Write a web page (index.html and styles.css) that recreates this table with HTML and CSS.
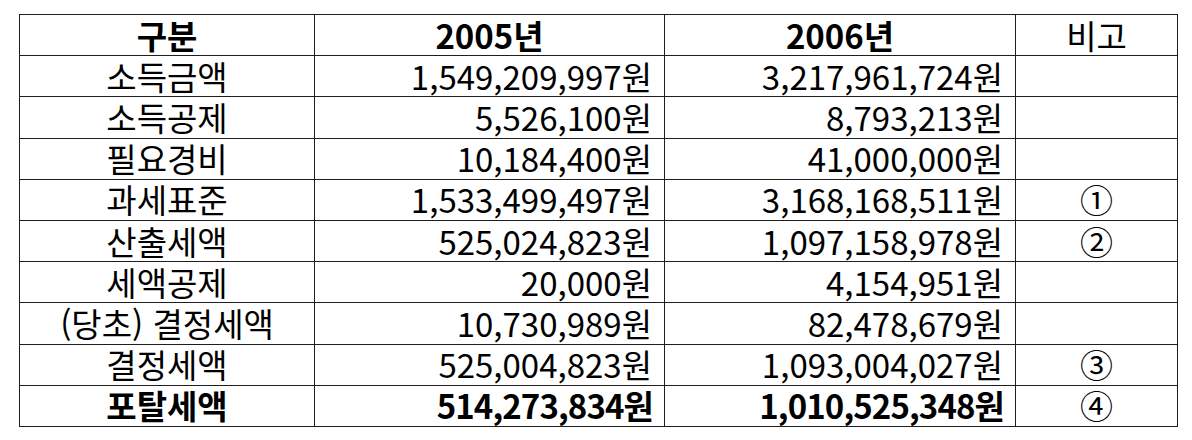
FILE: index.html
```html
<!DOCTYPE html>
<html lang="ko">
<head>
<meta charset="utf-8">
<title>세액 비교</title>
<link rel="stylesheet" href="styles.css">
</head>
<body>
<table class="tax">
  <colgroup>
    <col class="c-label">
    <col class="c-y1">
    <col class="c-y2">
    <col class="c-note">
  </colgroup>
  <tr class="head">
    <td class="label bold">구분</td>
    <td class="center bold">2005년</td>
    <td class="center bold">2006년</td>
    <td class="center">비고</td>
  </tr>
  <tr>
    <td class="label">소득금액</td>
    <td class="num">1,549,209,997원</td>
    <td class="num">3,217,961,724원</td>
    <td class="center"></td>
  </tr>
  <tr>
    <td class="label">소득공제</td>
    <td class="num">5,526,100원</td>
    <td class="num">8,793,213원</td>
    <td class="center"></td>
  </tr>
  <tr>
    <td class="label">필요경비</td>
    <td class="num">10,184,400원</td>
    <td class="num">41,000,000원</td>
    <td class="center"></td>
  </tr>
  <tr>
    <td class="label">과세표준</td>
    <td class="num">1,533,499,497원</td>
    <td class="num">3,168,168,511원</td>
    <td class="center">①</td>
  </tr>
  <tr>
    <td class="label">산출세액</td>
    <td class="num">525,024,823원</td>
    <td class="num">1,097,158,978원</td>
    <td class="center">②</td>
  </tr>
  <tr>
    <td class="label">세액공제</td>
    <td class="num">20,000원</td>
    <td class="num">4,154,951원</td>
    <td class="center"></td>
  </tr>
  <tr>
    <td class="label">(당초) 결정세액</td>
    <td class="num">10,730,989원</td>
    <td class="num">82,478,679원</td>
    <td class="center"></td>
  </tr>
  <tr>
    <td class="label">결정세액</td>
    <td class="num">525,004,823원</td>
    <td class="num">1,093,004,027원</td>
    <td class="center">③</td>
  </tr>
  <tr class="total">
    <td class="label bold">포탈세액</td>
    <td class="num bold">514,273,834원</td>
    <td class="num bold">1,010,525,348원</td>
    <td class="center">④</td>
  </tr>
</table>
</body>
</html>
```

FILE: styles.css
```css
html, body {
  margin: 0;
  padding: 0;
  background: #ffffff;
}

body {
  padding: 14px 0 0 19px;
  font-family: "Noto Sans CJK KR", "Noto Sans", sans-serif;
  color: #000000;
}

.tax {
  border-collapse: collapse;
  table-layout: fixed;
  width: 1158px;
  font-size: 33px;
  line-height: 1;
}

.c-label { width: 295px; }
.c-y1 { width: 350px; }
.c-y2 { width: 351px; }
.c-note { width: 162px; }

.tax tr {
  height: 41.2px;
}

.tax td {
  border: 1px solid #1e1e1e;
  padding: 0 12px 0 0;
  vertical-align: middle;
  white-space: nowrap;
}

.tax td.label,
.tax td.center {
  padding: 0;
  text-align: center;
}

.num {
  text-align: right;
}

.bold {
  font-weight: 700;
}

.tax td.num.bold {
  letter-spacing: -0.9px;
  padding-right: 11px;
}
```
